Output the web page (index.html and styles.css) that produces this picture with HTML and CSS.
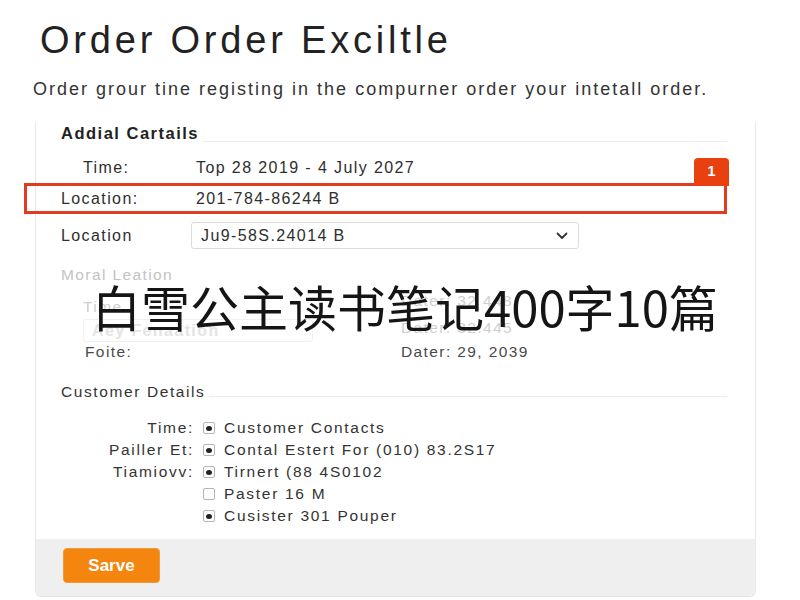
FILE: index.html
```html
<!DOCTYPE html>
<html lang="en">
<head>
<meta charset="utf-8">
<title>Order Order Exciltle</title>
<link rel="stylesheet" href="styles.css">
</head>
<body>
<div class="page">
  <h1 class="title">Order Order Exciltle</h1>
  <p class="subtitle">Order grour tine registing in the compurner order your intetall order.</p>

  <div class="card">
    <div class="card-body">
      <div class="section-head">
        <span class="section-title bold">Addial Cartails</span>
        <span class="rule"></span>
      </div>

      <div class="row row-time">
        <span class="label indent">Time:</span>
        <span class="value">Top 28 2019 - 4 July 2027</span>
      </div>

      <div class="row row-hl">
        <span class="badge">1</span>
        <span class="label">Location:</span>
        <span class="value">201-784-86244 B</span>
      </div>

      <div class="row row-select">
        <span class="label label-sel">Location</span>
        <div class="select">
          <span>Ju9-58S.24014 B</span>
          <svg class="chev" width="12" height="8" viewBox="0 0 12 8"><polyline points="1.5,1.5 6,6 10.5,1.5" fill="none" stroke="#333" stroke-width="1.8" stroke-linecap="round" stroke-linejoin="round"/></svg>
        </div>
      </div>

      <div class="moral">Moral Leation</div>

      <div class="faded">
        <div class="fcol">
          <span class="ftext">Time</span>
          <div class="finput">Aey Fenaation</div>
        </div>
        <div class="fcol fright">
          <span class="ftext">Dater: 32 448</span>
          <span class="ftext">Dater: 32.445</span>
        </div>
      </div>

      <div class="foite">
        <span class="flabel">Foite:</span>
        <span class="fval">Dater: 29, 2039</span>
      </div>

      <div class="section-head cust-head">
        <span class="section-title">Customer Details</span>
        <span class="rule"></span>
      </div>

      <div class="checks">
        <span class="clabel">Time:</span><span class="cb on"></span><span class="ctext">Customer Contacts</span>
        <span class="clabel">Pailler Et:</span><span class="cb on"></span><span class="ctext">Contal Estert For (010) 83.2S17</span>
        <span class="clabel">Tiamiovv:</span><span class="cb on"></span><span class="ctext">Tirnert (88 4S0102</span>
        <span class="clabel"></span><span class="cb"></span><span class="ctext">Paster 16 M</span>
        <span class="clabel"></span><span class="cb on"></span><span class="ctext">Cusister 301 Pouper</span>
      </div>
    </div>
    <div class="card-foot">
      <button class="save">Sarve</button>
    </div>
  </div>

  <div class="overlay">白雪公主读书笔记400字10篇</div>
</div>
</body>
</html>
```

FILE: styles.css
```css
* { box-sizing: border-box; }
html, body { margin: 0; padding: 0; background: #fff; }
body {
  font-family: "Liberation Sans", Arial, "Noto Sans CJK SC", sans-serif;
  color: #333;
  width: 800px;
  height: 600px;
  overflow: hidden;
  letter-spacing: 1.4px;
}
.page { position: relative; padding-top: 20px; }

.title {
  margin: 0 0 0 40px;
  font-size: 38px;
  font-weight: normal;
  color: #222;
  line-height: 40px;
  letter-spacing: 3.8px;
}
.subtitle {
  margin: 18px 0 0 33px;
  font-size: 18px;
  line-height: 22px;
  color: #333;
  letter-spacing: 2px;
}

.card {
  margin: 22px 44px 0 35px;
  border-left: 1px solid #e8e8e8;
  border-right: 1px solid #e8e8e8;
  border-bottom: 1px solid #e4e4e4;
  border-radius: 0 0 6px 6px;
}
.card-body { padding: 0 28px 14px 25px; }

.section-head {
  display: flex;
  align-items: flex-end;
  height: 20px;
}
.section-title { font-size: 15.5px; line-height: 18px; color: #333; letter-spacing: 1.6px; }
.bold { font-weight: bold; color: #222; font-size: 16.5px; letter-spacing: 1.5px; }
.rule { flex: 1; border-bottom: 1px solid #ececec; margin-left: 4px; }

.row {
  display: flex;
  align-items: center;
  font-size: 16px;
  color: #2e2e2e;
}
.label { width: 135px; flex: none; }
.indent { padding-left: 22px; }
.row-time { height: 30px; margin-top: 11px; }

.row-hl {
  position: relative;
  height: 31px;
  margin-left: -37px;
  padding-left: 34px;
  border: 3px solid #e23b22;
}
.badge {
  position: absolute;
  right: -5px;
  bottom: 100%;
  width: 35px;
  height: 28px;
  background: #e8400f;
  color: #fff;
  font-weight: bold;
  font-size: 15px;
  letter-spacing: 0;
  border-radius: 4px 4px 0 0;
  display: flex;
  align-items: center;
  justify-content: center;
  padding-bottom: 3px;
}

.row-select { margin-top: 8px; height: 27px; }
.label-sel { width: 130px; }
.select {
  width: 388px;
  height: 27px;
  border: 1px solid #dcdcdc;
  border-radius: 3px;
  display: flex;
  align-items: center;
  justify-content: space-between;
  padding: 0 10px 0 9px;
  font-size: 16px;
  color: #2e2e2e;
}
.chev { margin-top: 1px; }

.moral {
  margin-top: 17px;
  font-size: 15.5px;
  color: #c3c3c3;
  line-height: 18px;
}

.faded {
  display: flex;
  margin-top: 14px;
  height: 45px;
  padding-left: 22px;
}
.fcol { display: flex; flex-direction: column; width: 318px; }
.fright { margin-top: -6px; gap: 9px; }
.ftext { font-size: 15.5px; color: #cfcfcf; line-height: 18px; }
.finput {
  width: 230px;
  height: 23px;
  margin-top: 3px;
  border: 1px solid #f0f0f0;
  border-radius: 3px;
  font-size: 16px;
  font-weight: bold;
  color: #e4e4e4;
  padding-left: 8px;
  line-height: 22px;
}

.foite {
  display: flex;
  font-size: 15.5px;
  color: #4a4a4a;
  line-height: 18px;
  padding-left: 24px;
}
.flabel { width: 316px; }

.cust-head { margin-top: 20px; }
.cust-head .rule { margin-bottom: 4px; }

.checks {
  display: grid;
  grid-template-columns: 133px 12px auto;
  column-gap: 9px;
  row-gap: 4px;
  margin-top: 18px;
  align-items: center;
  font-size: 15.5px;
  line-height: 18px;
  color: #333;
  letter-spacing: 1.7px;
}
.clabel { text-align: right; }
.cb {
  width: 12px;
  height: 12px;
  border: 1px solid #b5b5b5;
  border-radius: 2px;
  position: relative;
  background: #fff;
}
.cb.on::after {
  content: "";
  position: absolute;
  left: 2px;
  top: 2.5px;
  width: 6px;
  height: 5px;
  border-radius: 50%;
  background: #222;
}

.card-foot {
  background: #efefef;
  height: 57px;
  padding: 9px 0 0 27px;
  border-radius: 0 0 6px 6px;
}
.save {
  width: 97px;
  height: 35px;
  background: #f4860f;
  border: 1px solid #f29a3a;
  border-radius: 4px;
  color: #fff;
  font-family: "Liberation Sans", Arial, sans-serif;
  font-size: 17px;
  font-weight: bold;
  letter-spacing: 0;
  cursor: pointer;
}

.overlay {
  position: absolute;
  left: 92px;
  top: 277px;
  font-family: "Noto Sans CJK SC", sans-serif;
  font-size: 49px;
  line-height: 58px;
  letter-spacing: 0;
  color: #151515;
  white-space: nowrap;
}
```
